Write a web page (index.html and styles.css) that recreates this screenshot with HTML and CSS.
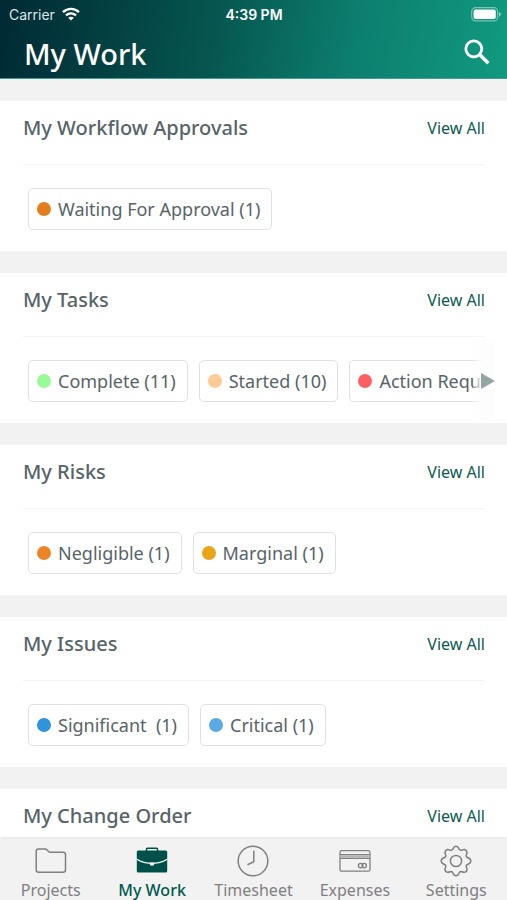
FILE: index.html
```html
<!DOCTYPE html>
<html lang="en">
<head>
<meta charset="utf-8">
<meta name="viewport" content="width=device-width, initial-scale=1">
<title>My Work</title>
<link rel="stylesheet" href="styles.css">
</head>
<body>
<header class="top">
  <div class="status">
    <span class="carrier">Carrier
      <svg width="18" height="14" viewBox="0 0 18 14" fill="none" stroke="#fff" stroke-width="2.4" aria-hidden="true"><path d="M1 5.2C5.6.8 12.4.8 17 5.2"/><path d="M4 8.4c3-2.700 7-2.700 10 0"/><path d="M9 13.600l-2.800-2.900c1.600-1.400 4-1.400 5.600 0z" fill="#fff" stroke="none"/></svg>
    </span>
    <time class="clock">4:39 PM</time>
    <svg class="battery" width="31" height="15" viewBox="0 0 31 15" aria-hidden="true"><rect x=".7" y=".7" width="26" height="13.2" rx="4" fill="none" stroke="#fff" stroke-opacity=".45" stroke-width="1.2"/><rect x="2.6" y="2.6" width="22.2" height="9.4" rx="2" fill="#fff"/><path d="M28 4.800q4 2.500 0 5z" fill="#fff" fill-opacity=".5"/></svg>
  </div>
  <div class="titlebar">
    <h1>My Work</h1>
    <button class="search" type="button" aria-label="Search">
      <svg width="26" height="26" viewBox="0 0 26 26" fill="none" stroke="#fff" aria-hidden="true"><circle cx="9.8" cy="9.8" r="8" stroke-width="2.8"/><path d="M15.3 15.3l9 9" stroke-width="3.4"/></svg>
    </button>
  </div>
</header>

<main class="content">
  <section class="card">
    <div class="card-head"><h2>My Workflow Approvals</h2><a href="#approvals">View All</a></div>
    <div class="chips">
      <button class="chip" type="button"><i class="dot waiting"></i>Waiting For Approval (1)</button>
    </div>
  </section>
  <section class="card">
    <div class="card-head"><h2>My Tasks</h2><a href="#tasks">View All</a></div>
    <div class="chips">
      <button class="chip" type="button"><i class="dot complete"></i>Complete (11)</button>
      <button class="chip" type="button"><i class="dot started"></i>Started (10)</button>
      <button class="chip" type="button"><i class="dot action"></i>Action Required</button>
    </div>
    <button class="more" type="button" aria-label="More tasks">
      <svg width="14" height="16" viewBox="0 0 14 16" aria-hidden="true"><path d="M0 0l14 8-14 8z" fill="#94a5a3"/></svg>
    </button>
  </section>
  <section class="card">
    <div class="card-head"><h2>My Risks</h2><a href="#risks">View All</a></div>
    <div class="chips">
      <button class="chip" type="button"><i class="dot negligible"></i>Negligible (1)</button>
      <button class="chip" type="button"><i class="dot marginal"></i>Marginal (1)</button>
    </div>
  </section>
  <section class="card">
    <div class="card-head"><h2>My Issues</h2><a href="#issues">View All</a></div>
    <div class="chips">
      <button class="chip" type="button"><i class="dot significant"></i>Significant&nbsp; (1)</button>
      <button class="chip" type="button"><i class="dot critical"></i>Critical (1)</button>
    </div>
  </section>
  <section class="card">
    <div class="card-head"><h2>My Change Order</h2><a href="#changes">View All</a></div>
  </section>
</main>

<nav class="tabs">
  <a href="#projects">
    <svg width="32" height="32" viewBox="0 0 32 32" fill="none" stroke="#808080" stroke-width="1.5" aria-hidden="true"><path d="M1.2 24.7V6.3q0-2.3 2.3-2.3h6.7q1.2 0 2 .9l1.4 1.5q.7.8 1.8.8h12.7q2.400 0 2.400 2.400v15.100q0 2.500-2.500 2.500H3.700q-2.500 0-2.500-2.500z"/></svg>
    Projects
  </a>
  <a href="#work" class="active" aria-current="page">
    <svg width="32" height="32" viewBox="0 0 32 32" aria-hidden="true"><path d="M10.500 6V4.200q0-.9.9-.9h9.200q.9 0 .9.9V6" fill="none" stroke="#00504a" stroke-width="1.5"/><rect x=".8" y="5.400" width="30.400" height="22.200" rx="1.500" fill="#00504a"/><path d="M.8 14.200q7 4.200 15.200 4.200t15.200-4.200" fill="none" stroke="#f2f2f2" stroke-width="1.2"/><path d="M13.600 17.600h4.800v1.200q0 2-2.400 2t-2.400-2z" fill="#f2f2f2"/></svg>
    My Work
  </a>
  <a href="#timesheet">
    <svg width="32" height="32" viewBox="0 0 32 32" fill="none" stroke="#808080" stroke-width="1.5" aria-hidden="true"><circle cx="16" cy="16" r="14.8"/><path d="M16.800 5.800v11l-6.300 3"/></svg>
    Timesheet
  </a>
  <a href="#expenses">
    <svg width="32" height="32" viewBox="0 0 32 32" fill="none" stroke="#808080" stroke-width="1.3" aria-hidden="true"><rect x="1" y="5.600" width="30" height="20.600" rx="1.800"/><path d="M1 9.700h30M1 13.300h30"/><path d="M1 11.500h30" stroke="#b3b3b3" stroke-width="2.4"/><circle cx="21.600" cy="20.600" r="2.200"/><circle cx="25.200" cy="20.600" r="2.200"/></svg>
    Expenses
  </a>
  <a href="#settings">
    <svg width="32" height="32" viewBox="0 0 32 32" fill="none" stroke="#808080" stroke-width="1.5" stroke-linejoin="round" aria-hidden="true"><circle cx="16" cy="16" r="5.6"/><path d="M16 1.2c2 0 2.4 1 3.1 2.7.5 1.3 1.5 1.7 2.8 1.2 1.8-.8 3-1.2 4.3.3 1.3 1.4 1 2.6.2 4.3-.6 1.3-.1 2.3 1.2 2.8 1.700.7 3.200 1.300 3.200 3.500s-1.500 2.800-3.200 3.500c-1.300.5-1.800 1.500-1.200 2.800.8 1.700 1 2.900-.2 4.200-1.300 1.400-2.500 1.100-4.300.3-1.300-.5-2.300 0-2.800 1.300-.7 1.700-1.100 2.700-3.100 2.700s-2.400-1-3.100-2.700c-.5-1.300-1.500-1.800-2.800-1.300-1.800.8-3 1.100-4.300-.3-1.200-1.300-1-2.500-.2-4.200.6-1.300.1-2.300-1.200-2.800C2.700 18.800 1.200 18.200 1.200 16s1.500-2.800 3.200-3.500c1.300-.5 1.800-1.500 1.200-2.800-.8-1.700-1.100-2.900.2-4.300 1.300-1.500 2.500-1.100 4.300-.3 1.300.5 2.300.1 2.800-1.200C13.600 2.200 14 1.200 16 1.200z"/></svg>
    Settings
  </a>
</nav>
</body>
</html>
```
FILE: styles.css
```css
* { box-sizing: border-box; }

body {
  margin: 0;
  height: 100vh;
  display: flex;
  flex-direction: column;
  background: #f2f2f2;
  color: #566468;
  font-family: "Segoe UI", "Noto Sans", "Open Sans", sans-serif;
}

h1, h2 { margin: 0; }
a { text-decoration: none; }
svg { display: block; flex: none; }

button {
  margin: 0;
  padding: 0;
  border: 0;
  background: none;
  color: inherit;
  font: inherit;
}

.top {
  flex: none;
  height: 79px;
  color: #fff;
  background: linear-gradient(100deg, #002b35 2%, #06564f 42%, #0c7f70 70%, #119a80 100%);
  border-bottom: 1px solid #4a9a90;
}

.status {
  display: grid;
  grid-template-columns: 1fr auto 1fr;
  align-items: center;
  height: 28px;
  padding: 0 8px 0 9px;
  font-family: Inter, sans-serif;
  font-size: 14px;
}

.carrier {
  display: flex;
  align-items: center;
  gap: 7px;
  color: #dce6e6;
}

.clock { font-weight: 600; }
.battery { justify-self: end; margin-right: -3px; }

.titlebar {
  display: flex;
  align-items: center;
  justify-content: space-between;
  height: 50px;
  padding: 0 17px 2px 24px;
}

.titlebar h1 {
  padding-top: 3px;
  font-size: 29px;
  font-weight: 500;
  line-height: 36px;
}

.content {
  flex: 1;
  min-height: 0;
  overflow: hidden;
  padding-top: 22px;
  display: flex;
  flex-direction: column;
  gap: 22px;
}

.card {
  position: relative;
  flex: none;
  padding: 0 22px 0 23px;
  background: #fff;
}

.card-head {
  display: flex;
  align-items: center;
  justify-content: space-between;
  height: 64px;
  padding-bottom: 10px;
  border-bottom: 1px solid #f3f3f3;
}

.card-head h2 {
  font-size: 20px;
  font-weight: 500;
}

.card-head a {
  color: #0b5a4f;
  font-size: 16px;
}

.chips {
  display: flex;
  gap: 11px;
  overflow: hidden;
  padding: 23px 0 21px 5px;
}

.chip {
  flex: none;
  display: flex;
  align-items: center;
  gap: 7px;
  height: 42px;
  padding: 0 11px 0 8px;
  border: 1px solid #e0e2e2;
  border-radius: 5px;
  font-size: 18px;
  white-space: nowrap;
}

.dot {
  width: 14px;
  height: 14px;
  border-radius: 50%;
}

.waiting { background: #e27e20; }
.complete { background: #98fb98; }
.started { background: #fccb96; }
.action { background: #fc6060; }
.negligible { background: #ec8526; }
.marginal { background: #e9a51a; }
.significant { background: #2f94da; }
.critical { background: #5aa9e3; }

.more {
  position: absolute;
  top: 66px;
  right: 12px;
  bottom: 1px;
  width: 22px;
  display: flex;
  align-items: center;
  justify-content: flex-end;
  background: linear-gradient(90deg, rgba(253, 253, 253, 0.3), #fdfdfd 50%);
}

.tabs {
  flex: none;
  display: grid;
  grid-template-columns: repeat(5, 1fr);
  height: 61px;
  background: #f2f2f2;
  box-shadow: 0 -1px 3px rgba(0, 0, 0, 0.14);
  z-index: 1;
}

.tabs a {
  display: flex;
  flex-direction: column;
  align-items: center;
  padding-top: 6px;
  gap: 2px;
  color: #808080;
  font-size: 16px;
  line-height: 22px;
}

.tabs .active {
  color: #00594c;
  font-weight: 500;
}
```
